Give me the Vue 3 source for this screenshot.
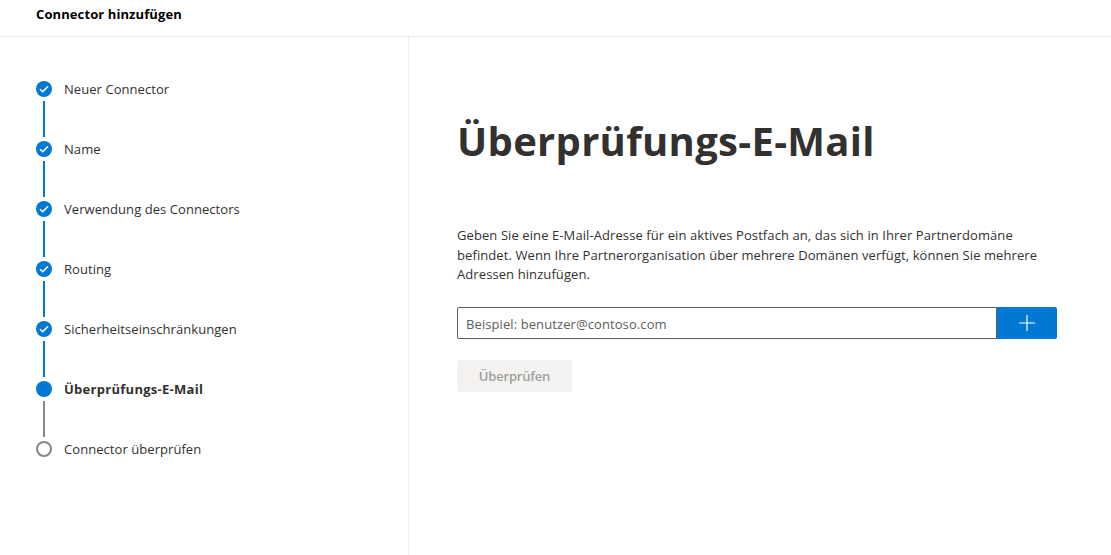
<script setup>
const doneSteps = ['Neuer Connector', 'Name', 'Verwendung des Connectors', 'Routing', 'Sicherheitseinschränkungen']
</script>

<template>
  <div class="wizard">
    <header class="wizard-header">Connector hinzufügen</header>
    <div class="wizard-body">
      <nav class="steps">
        <div v-for="step in doneSteps" :key="step" class="step">
          <div class="step-marker">
            <span class="dot dot-done">
              <svg width="10" height="8" viewBox="0 0 10 8">
                <path d="M1 4.2 L3.7 6.8 L9 1.4" fill="none" stroke="#fff" stroke-width="1.5" />
              </svg>
            </span>
            <span class="line line-done" />
          </div>
          <span class="step-label">{{ step }}</span>
        </div>
        <div class="step">
          <div class="step-marker">
            <span class="dot dot-current" />
            <span class="line line-todo" />
          </div>
          <span class="step-label step-label-current">Überprüfungs-E-Mail</span>
        </div>
        <div class="step">
          <div class="step-marker">
            <span class="dot dot-todo" />
          </div>
          <span class="step-label">Connector überprüfen</span>
        </div>
      </nav>

      <main class="content">
        <h1 class="title">Überprüfungs-E-Mail</h1>
        <p class="description">
          Geben Sie eine E-Mail-Adresse für ein aktives Postfach an, das sich in Ihrer Partnerdomäne<br>
          befindet. Wenn Ihre Partnerorganisation über mehrere Domänen verfügt, können Sie mehrere<br>
          Adressen hinzufügen.
        </p>
        <div class="add-row">
          <input class="email-input" type="text" placeholder="Beispiel: benutzer@contoso.com">
          <button class="add-button" type="button" aria-label="Hinzufügen">
            <svg width="16" height="16" viewBox="0 0 16 16">
              <path d="M8 0 V16 M0 8 H16" fill="none" stroke="#fff" stroke-width="1.2" />
            </svg>
          </button>
        </div>
        <button class="verify-button" type="button" disabled>Überprüfen</button>
      </main>
    </div>
  </div>
</template>

<style>
html, body {
  margin: 0;
  background: #fff;
}
</style>

<style scoped>
.wizard {
  width: 1111px;
  height: 555px;
  overflow: hidden;
  display: flex;
  flex-direction: column;
  font-family: "Open Sans", "Noto Sans", sans-serif;
  color: #323130;
}

.wizard-header {
  height: 36px;
  flex: none;
  box-sizing: content-box;
  border-bottom: 1px solid #edebe9;
  padding-left: 36px;
  font-size: 13px;
  font-weight: 700;
  line-height: 29px;
  color: #000;
  letter-spacing: 0.1px;
}

.wizard-body {
  flex: 1;
  display: flex;
  min-height: 0;
}

.steps {
  width: 408px;
  flex: none;
  box-sizing: content-box;
  border-right: 1px solid #edebe9;
  padding-top: 44px;
  padding-left: 0;
  margin: 0;
}

.step {
  height: 60px;
  display: flex;
  padding-left: 36px;
  position: relative;
}

.step-marker {
  width: 16px;
  display: flex;
  flex-direction: column;
  align-items: center;
  gap: 4px;
}

.dot {
  width: 16px;
  height: 16px;
  flex: none;
  box-sizing: border-box;
  border-radius: 50%;
  display: flex;
  align-items: center;
  justify-content: center;
}

.dot-done,
.dot-current {
  background: #0078d4;
}

.dot-todo {
  border: 2px solid #8a8886;
}

.line {
  width: 2px;
  height: 36px;
  flex: none;
}

.line-done {
  background: #0078d4;
}

.line-todo {
  background: #8a8886;
}

.step-label {
  margin-left: 12px;
  font-size: 13px;
  line-height: 16px;
  letter-spacing: 0.06px;
}

.step-label-current {
  font-weight: 700;
  letter-spacing: 0.28px;
}

.content {
  flex: 1;
  padding-left: 48px;
}

.title {
  margin: 78px 0 0;
  font-size: 40px;
  line-height: 52px;
  font-weight: 700;
  letter-spacing: 0.3px;
  color: #323130;
}

.description {
  margin: 59px 0 0;
  width: 600px;
  font-size: 13px;
  line-height: 19.5px;
  letter-spacing: 0.09px;
}

.add-row {
  margin-top: 22px;
  display: flex;
  height: 32px;
}

.email-input {
  width: 540px;
  height: 32px;
  box-sizing: border-box;
  border: 1px solid #605e5c;
  border-radius: 2px 0 0 2px;
  padding: 2px 8px 0;
  outline: none;
  font-family: inherit;
  font-size: 13px;
  letter-spacing: 0.09px;
  color: #323130;
}

.email-input::placeholder {
  color: #605e5c;
  opacity: 1;
}

.add-button {
  width: 60px;
  height: 32px;
  border: none;
  padding: 0;
  border-radius: 0 2px 2px 0;
  background: #0078d4;
  display: flex;
  align-items: center;
  justify-content: center;
}

.verify-button {
  display: block;
  margin-top: 21px;
  width: 115px;
  height: 32px;
  border: none;
  border-radius: 2px;
  background: #f3f2f1;
  color: #a19f9d;
  font-family: inherit;
  font-size: 13px;
  font-weight: 600;
  letter-spacing: -0.2px;
}
</style>
